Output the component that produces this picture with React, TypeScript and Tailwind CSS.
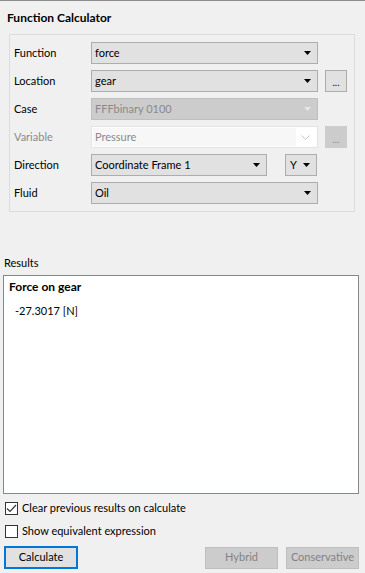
import React from "react";

const font = { fontFamily: 'Lato, "Noto Sans", Arial, sans-serif' };

function Arrow({ color = "#000" }: { color?: string }) {
  return (
    <svg width="7" height="4" viewBox="0 0 7 4" className="shrink-0">
      <polygon points="0,0 7,0 3.5,4" fill={color} />
    </svg>
  );
}

function Chevron() {
  return (
    <svg width="9" height="5" viewBox="0 0 9 5" className="shrink-0">
      <polyline points="0.5,0.5 4.5,4.5 8.5,0.5" fill="none" stroke="#c8c8c8" strokeWidth="1" />
    </svg>
  );
}

function Combo({ text, w, disabled }: { text: string; w: string; disabled?: boolean }) {
  return (
    <div
      className={`${w} h-[22px] flex items-center justify-between pl-[3px] pr-[6px] border ${
        disabled ? "bg-[#cccccc] border-[#bfbfbf] text-[#8a8a8a]" : "bg-[#e1e1e1] border-[#adadad] text-black"
      }`}
    >
      <span>{text}</span>
      <Arrow color={disabled ? "#e6e6e6" : "#000"} />
    </div>
  );
}

function Row({ label, children, labelGray }: { label: string; children: React.ReactNode; labelGray?: boolean }) {
  return (
    <div className="flex items-center h-[22px]">
      <div className={`w-[81px] pl-[4px] ${labelGray ? "text-[#8a8a8a]" : "text-black"}`}>{label}</div>
      {children}
    </div>
  );
}

export default function App() {
  return (
    <div className="w-[365px] h-[573px] bg-[#f0f0f0] border-t border-[#8c8c8c] text-[11px] flex flex-col overflow-hidden" style={font}>
      <div className="pl-[7px] pt-[9px] h-[33px] text-[12px] font-bold text-black leading-[16px]">Function Calculator</div>
      <div className="ml-[9px] w-[346px] h-[178px] border border-[#dcdcdc] pt-[7px] flex flex-col gap-[6px]">
        <Row label="Function">
          <Combo text="force" w="w-[227px]" />
        </Row>
        <Row label="Location">
          <Combo text="gear" w="w-[227px]" />
          <div className="ml-[7px] w-[22px] h-[22px] bg-[#e1e1e1] border border-[#adadad] flex items-end justify-center pb-[4px] text-[10px] leading-[10px]">...</div>
        </Row>
        <Row label="Case">
          <Combo text="FFFbinary 0100" w="w-[227px]" disabled />
        </Row>
        <Row label="Variable" labelGray>
          <div className="w-[227px] h-[22px] bg-white border border-[#e3e3e3] flex items-center justify-between pr-[7px]">
            <div className="ml-[1px] h-[18px] w-[203px] bg-[#f7f7f7] pl-[2px] flex items-center text-[#8a8a8a]">Pressure</div>
            <Chevron />
          </div>
          <div className="ml-[7px] w-[22px] h-[22px] bg-[#cccccc] flex items-end justify-center pb-[4px] text-[10px] leading-[10px] text-[#8a8a8a]">...</div>
        </Row>
        <Row label="Direction">
          <Combo text="Coordinate Frame 1" w="w-[176px]" />
          <div className="ml-[18px] w-[32px] h-[22px] bg-[#e1e1e1] border border-[#adadad] flex items-center justify-between pl-[4px] pr-[6px]">
            <span>Y</span>
            <Arrow />
          </div>
        </Row>
        <Row label="Fluid">
          <Combo text="Oil" w="w-[227px]" />
        </Row>
      </div>
      <div className="pl-[4px] mt-[43px] h-[20px] leading-[16px] text-black">Results</div>
      <div className="ml-[3px] w-[356px] h-[219px] bg-white border border-[#828790] flex flex-col">
        <div className="pl-[5px] pt-[3px] text-[12px] font-bold leading-[16px]">Force on gear</div>
        <div className="pl-[11px] pt-[8px] leading-[16px]">-27.3017 [N]</div>
      </div>
      <div className="mt-[7px] pl-[5px] flex items-center gap-[4px] h-[14px]">
        <div className="w-[13px] h-[13px] bg-white border border-[#333333] flex items-center justify-center">
          <svg width="11" height="9" viewBox="0 0 11 9">
            <polyline points="1,4.5 4,7.5 10,1" fill="none" stroke="#333333" strokeWidth="1.2" />
          </svg>
        </div>
        <span>Clear previous results on calculate</span>
      </div>
      <div className="mt-[9px] pl-[5px] flex items-center gap-[4px] h-[14px]">
        <div className="w-[13px] h-[13px] bg-white border border-[#333333]" />
        <span>Show equivalent expression</span>
      </div>
      <div className="mt-[8px] flex items-center h-[23px]">
        <div className="ml-[4px] w-[74px] h-[23px] bg-[#e1e1e1] border-2 border-[#0078d7] flex items-center justify-center">Calculate</div>
        <div className="ml-[127px] w-[73px] h-[22px] bg-[#cccccc] border border-[#bfbfbf] flex items-center justify-center text-[#838383]">Hybrid</div>
        <div className="ml-[8px] w-[73px] h-[22px] bg-[#cccccc] border border-[#bfbfbf] flex items-center justify-center text-[#838383]">Conservative</div>
      </div>
    </div>
  );
}
